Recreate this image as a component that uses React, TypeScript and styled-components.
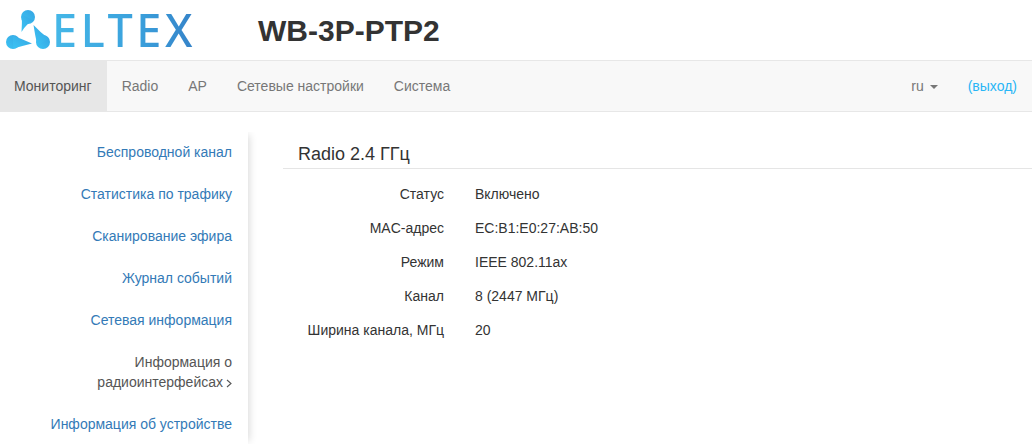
import React from "react";
import styled, { createGlobalStyle } from "styled-components";

const GlobalStyle = createGlobalStyle`
    html, body {
        margin: 0;
        padding: 0;
        background: #fff;
        font-family: "Liberation Sans", Arial, sans-serif;
        font-size: 14px;
        line-height: 20px;
        color: #333;
    }
`;

const Page = styled.div`
    width: 1032px;
    height: 448px;
    overflow: hidden;
`;

const Header = styled.header`
    height: 60px;
    display: flex;
    align-items: center;
`;

const Logo = styled.div`
    width: 258px;
    display: flex;
    align-items: center;
`;

const LogoWord = styled.span`
    font-family: "Noto Sans", sans-serif;
    font-size: 45px;
    line-height: 50px;
    font-weight: 500;
    letter-spacing: 3.6px;
    background: linear-gradient(90deg, #45b8e8 0%, #3aa0dc 60%, #3582c8 100%);
    -webkit-background-clip: text;
    background-clip: text;
    color: transparent;
`;

const DeviceName = styled.h1`
    margin: 0;
    font-size: 30px;
    line-height: 33px;
    font-weight: 700;
    color: #333;
`;

const Navbar = styled.nav`
    height: 50px;
    background: #f8f8f8;
    border: 1px solid #e7e7e7;
    border-left: 0;
    border-right: 0;
    display: flex;
    align-items: stretch;
    justify-content: space-between;
`;

const NavGroup = styled.div`
    display: flex;
`;

const MainNav = styled(NavGroup)`
    margin-left: -1px;
`;

const NavLink = styled.a<{ $active?: boolean }>`
    padding: 15px;
    color: ${(p) => (p.$active ? "#555" : "#777")};
    background: ${(p) => (p.$active ? "#e7e7e7" : "transparent")};
`;

const Caret = styled.span`
    display: inline-block;
    margin-left: 6px;
    vertical-align: middle;
    border-top: 4px solid #777;
    border-left: 4px solid transparent;
    border-right: 4px solid transparent;
`;

const LogoutLink = styled.a`
    padding: 15px;
    color: #29b6f6;
`;

const Body = styled.div`
    display: flex;
    padding-top: 20px;
`;

const Sidebar = styled.aside`
    width: 248px;
    height: 312px;
    box-sizing: border-box;
    padding: 0 16px;
    box-shadow: 4px 0 8px -3px rgba(0, 0, 0, 0.16);
    clip-path: inset(0 -20px 0 0);
    text-align: right;
`;

const SideItem = styled.a<{ $current?: boolean }>`
    display: block;
    padding: 10px 0 12px;
    color: ${(p) => (p.$current ? "#555" : "#337ab7")};
`;

const Chevron = styled.svg`
    display: inline-block;
    width: 6px;
    height: 9px;
    margin-left: 3px;
    vertical-align: -1px;
`;

const Content = styled.main`
    flex: 1;
    padding-left: 35px;
`;

const SectionTitle = styled.h3`
    margin: 10px 0 15px;
    padding: 0 0 2px 15px;
    font-size: 18px;
    line-height: 24px;
    font-weight: 400;
    color: #333;
    border-bottom: 1px solid #e5e5e5;
`;

const InfoGrid = styled.dl`
    margin: 0;
    display: grid;
    grid-template-columns: 161px 1fr;
    column-gap: 31px;
    row-gap: 14px;
`;

const InfoLabel = styled.dt`
    text-align: right;
    font-weight: 400;
`;

const InfoValue = styled.dd`
    margin: 0;
`;

const rows: [string, string][] = [
    ["Статус", "Включено"],
    ["MAC-адрес", "EC:B1:E0:27:AB:50"],
    ["Режим", "IEEE 802.11ax"],
    ["Канал", "8 (2447 МГц)"],
    ["Ширина канала, МГц", "20"],
];

// viewBox matches the header, so coordinates read straight off the reference
const LogoMark = () => (
    <svg width="52" height="60" viewBox="0 0 52 60" aria-hidden="true">
        <defs>
            <linearGradient id="mark" x1="0" y1="1" x2="1" y2="0">
                <stop offset="0" stopColor="#3cc4f4" />
                <stop offset="1" stopColor="#35a4e2" />
            </linearGradient>
        </defs>
        <g fill="url(#mark)">
            <circle cx="28" cy="17" r="7" />
            <circle cx="13" cy="42" r="7" />
            <circle cx="43" cy="42" r="7" />
            <path d="M33.5 20.5 Q26 24 21.5 32 Q22 24 22 14.4 Z" />
            <path d="M12.5 35.5 Q22 39 32 43.5 Q22 46 13.5 48.5 Z" />
            <path d="M48.7 38.8 Q41 33 33.5 25 Q35 35 37.3 45.2 Z" />
        </g>
    </svg>
);

export default function App() {
    return (
        <Page>
            <GlobalStyle />
            <Header>
                <Logo>
                    <LogoMark />
                    <LogoWord>ELTEX</LogoWord>
                </Logo>
                <DeviceName>WB-3P-PTP2</DeviceName>
            </Header>
            <Navbar>
                <MainNav>
                    <NavLink $active>Мониторинг</NavLink>
                    <NavLink>Radio</NavLink>
                    <NavLink>AP</NavLink>
                    <NavLink>Сетевые настройки</NavLink>
                    <NavLink>Система</NavLink>
                </MainNav>
                <NavGroup>
                    <NavLink>
                        ru<Caret />
                    </NavLink>
                    <LogoutLink>(выход)</LogoutLink>
                </NavGroup>
            </Navbar>
            <Body>
                <Sidebar>
                    <SideItem>Беспроводной канал</SideItem>
                    <SideItem>Статистика по трафику</SideItem>
                    <SideItem>Сканирование эфира</SideItem>
                    <SideItem>Журнал событий</SideItem>
                    <SideItem>Сетевая информация</SideItem>
                    <SideItem $current>
                        Информация о радиоинтерфейсах
                        <Chevron viewBox="0 0 6 9" aria-hidden="true">
                            <path d="M1 1 L5 4.5 L1 8" fill="none" stroke="#555" strokeWidth="1.1" />
                        </Chevron>
                    </SideItem>
                    <SideItem>Информация об устройстве</SideItem>
                </Sidebar>
                <Content>
                    <SectionTitle>Radio 2.4 ГГц</SectionTitle>
                    <InfoGrid>
                        {rows.map(([label, value]) => (
                            <React.Fragment key={label}>
                                <InfoLabel>{label}</InfoLabel>
                                <InfoValue>{value}</InfoValue>
                            </React.Fragment>
                        ))}
                    </InfoGrid>
                </Content>
            </Body>
        </Page>
    );
}
